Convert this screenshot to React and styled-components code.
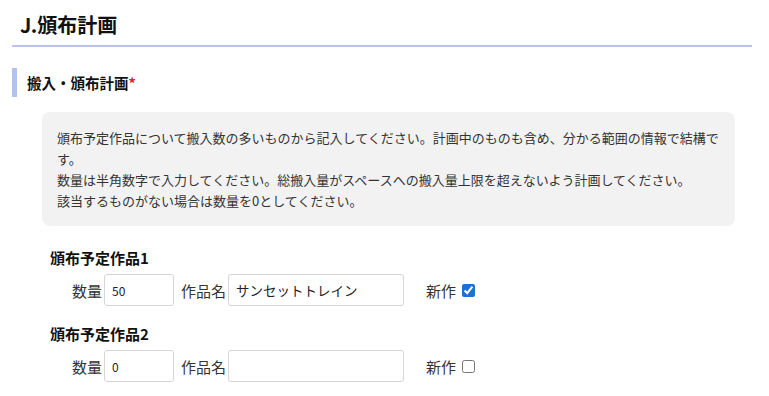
import styled, { createGlobalStyle } from 'styled-components'

const GlobalStyle = createGlobalStyle`
  body {
    margin: 0;
    background: #fff;
    color: #222;
    font-family: "Noto Sans CJK JP", "Noto Sans", sans-serif;
  }
`

const items = [
  { id: 1, qty: '50', name: 'サンセットトレイン', isNew: true },
  { id: 2, qty: '0', name: '', isNew: false },
  { id: 3, qty: '0', name: '', isNew: false },
]

export default function App() {
  return (
    <>
      <GlobalStyle />
      <Page>
        <Title>J.頒布計画</Title>
        <SectionHead>
          搬入・頒布計画<Required>*</Required>
        </SectionHead>
        <InfoBox>
          頒布予定作品について搬入数の多いものから記入してください。計画中のものも含め、分かる範囲の情報で結構です。
          <br />
          数量は半角数字で入力してください。総搬入量がスペースへの搬入量上限を超えないよう計画してください。
          <br />
          該当するものがない場合は数量を0としてください。
        </InfoBox>
        <ItemList>
          {items.map((item) => (
            <Item key={item.id}>
              <ItemLabel>頒布予定作品{item.id}</ItemLabel>
              <Row>
                <FieldLabel>数量</FieldLabel>
                <Input $w={70} $size={12} defaultValue={item.qty} />
                <FieldLabel $ml={7}>作品名</FieldLabel>
                <Input $w={176} $size={13.5} defaultValue={item.name} />
                <FieldLabel $ml={22}>新作</FieldLabel>
                <Check type="checkbox" defaultChecked={item.isNew} />
              </Row>
            </Item>
          ))}
        </ItemList>
      </Page>
    </>
  )
}

const Page = styled.div`
  width: 740px;
  margin-left: 12px;
  height: 396px;
  overflow: hidden;
`
const Title = styled.h2`
  margin: 0;
  padding: 11px 0 6px 8px;
  font-size: 20px;
  line-height: 28px;
  font-weight: 700;
  color: #111;
  border-bottom: 2px solid #b8c5ea;
`
const SectionHead = styled.h3`
  margin: 21px 0 0;
  height: 29px;
  display: flex;
  align-items: center;
  padding-left: 10px;
  border-left: 5px solid #b3c3ef;
  font-size: 14.5px;
  font-weight: 700;
  color: #111;
`
const Required = styled.span`
  color: #e0242c;
`
const InfoBox = styled.div`
  margin: 15px 0 0 30px;
  width: 666px;
  padding: 15px 12px 15px 15px;
  background: #f2f2f2;
  border-radius: 8px;
  font-size: 13px;
  line-height: 21px;
  color: #333;
`
const ItemList = styled.div`
  margin: 22px 0 0 38px;
`
const Item = styled.div`
  margin-bottom: 18px;
`
const ItemLabel = styled.div`
  font-size: 15px;
  line-height: 20px;
  font-weight: 700;
  color: #111;
`
const Row = styled.div`
  display: flex;
  align-items: center;
  margin-top: 6px;
  padding-left: 22px;
`
const FieldLabel = styled.span`
  font-size: 15px;
  color: #333;
  margin-left: ${({ $ml }) => $ml || 0}px;
  margin-right: 2px;
`
const Input = styled.input`
  box-sizing: border-box;
  width: ${({ $w }) => $w}px;
  height: 32px;
  padding: 0 7px;
  border: 1px solid #d6d6d6;
  border-radius: 3px;
  font-family: "Noto Sans CJK JP", "Noto Sans", sans-serif;
  font-size: ${({ $size }) => $size}px;
  color: #222;
  background: #fff;
  outline: none;
`
const Check = styled.input`
  width: 13px;
  height: 13px;
  margin: 0 0 0 4px;
  accent-color: #1f6fd6;
`
